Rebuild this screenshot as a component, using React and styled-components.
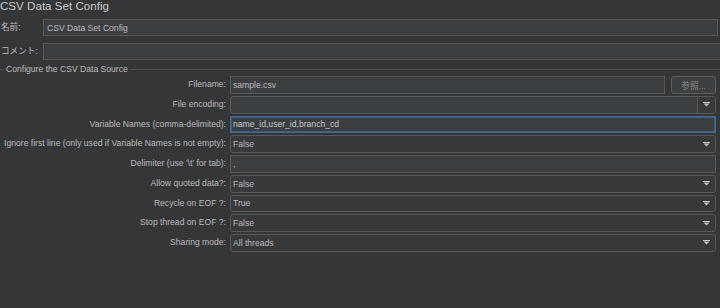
import React from 'react';
import styled, { createGlobalStyle } from 'styled-components';

const GlobalStyle = createGlobalStyle`
  html, body {
    margin: 0;
    padding: 0;
    background: #353638;
    overflow: hidden;
  }
  body {
    font-family: "Liberation Sans", "Noto Sans CJK JP", Arial, sans-serif;
    color: #bbbbbb;
  }
`;

const Page = styled.div`
  width: 720px;
  height: 308px;
  background: #353638;
  box-sizing: border-box;
`;

const Title = styled.div`
  font-size: 11.6px;
  line-height: 13px;
  height: 13px;
  margin-top: -1px;
  color: #c9c9c9;
  white-space: nowrap;
`;

const NameGrid = styled.div`
  display: grid;
  grid-template-columns: 43px 1fr;
  grid-auto-rows: 17px;
  row-gap: 7px;
  margin-top: 7px;
  padding-right: 2px;
`;

const NameLabel = styled.div`
  font-size: 8.6px;
  line-height: 17px;
  padding-left: 1px;
  white-space: nowrap;
`;

const TextField = styled.div`
  display: flex;
  align-items: center;
  box-sizing: border-box;
  height: 100%;
  min-width: 0;
  flex: 1;
  padding-left: ${(p) => p.$pad || 2}px;
  background: #3c3f41;
  border: 1px solid ${(p) => (p.$focused ? '#436892' : '#56595b')};
  box-shadow: ${(p) => (p.$focused ? 'inset 0 0 0 1px #3d5f86' : 'none')};
  margin-right: ${(p) => p.$bleed || 0}px;
  font-size: 8.6px;
  color: ${(p) => (p.$focused ? '#c6c6c6' : '#bbbbbb')};
  white-space: nowrap;
  overflow: hidden;
`;

const GroupHeader = styled.div`
  display: flex;
  align-items: center;
  height: 10px;
  margin-top: 4px;
  font-size: 8.6px;
  color: #bbbbbb;
  white-space: nowrap;
  gap: 2px;

  &::before {
    content: '';
    width: 4px;
    height: 1px;
    background: #4a4c4e;
  }
  &::after {
    content: '';
    flex: 1;
    height: 1px;
    background: #4a4c4e;
  }
`;

const FormGrid = styled.div`
  display: grid;
  grid-template-columns: 226px 1fr;
  grid-auto-rows: 17.75px;
  column-gap: 4px;
  row-gap: 2px;
  margin-top: 2px;
  padding-right: 4px;
`;

const Label = styled.div`
  font-size: 8.6px;
  line-height: 17.75px;
  text-align: right;
  white-space: nowrap;
  color: #bbbbbb;
`;

const FieldRow = styled.div`
  display: flex;
  gap: 6px;
  height: 100%;
  min-width: 0;
`;

const BrowseButton = styled.div`
  width: 45px;
  box-sizing: border-box;
  display: flex;
  align-items: center;
  justify-content: center;
  background: #3d4042;
  border: 1px solid #5c5f61;
  border-radius: 3px;
  font-size: 8.6px;
  color: #8c8c8c;
`;

const Combo = styled.div`
  display: flex;
  align-items: stretch;
  box-sizing: border-box;
  height: 100%;
  border: 1px solid #57595b;
  border-radius: 3px;
  background: ${(p) => (p.$editable ? '#3c3f41' : '#38393b')};
  overflow: hidden;
`;

const ComboText = styled.div`
  flex: 1;
  display: flex;
  align-items: center;
  padding-left: 2px;
  font-size: 8.6px;
  color: #bbbbbb;
  white-space: nowrap;
`;

const ArrowBox = styled.div`
  width: 17px;
  display: flex;
  align-items: center;
  justify-content: center;
  border-left: ${(p) => (p.$divider ? '1px solid #55575a' : 'none')};
  background: ${(p) => (p.$divider ? '#37393b' : 'transparent')};
`;

const Arrow = () => (
  <svg width="7" height="5" viewBox="0 0 7 5">
    <rect x="0" y="0" width="7" height="1" fill="#c4c4c4" />
    <polygon points="0.5,1.5 6.5,1.5 3.5,4.5" fill="#c4c4c4" />
  </svg>
);

const ComboBox = ({ value, editable }) => (
  <Combo $editable={editable}>
    <ComboText>{value}</ComboText>
    <ArrowBox $divider={editable}>
      <Arrow />
    </ArrowBox>
  </Combo>
);

const comboRows = [
  ['Allow quoted data?:', 'False'],
  ['Recycle on EOF ?:', 'True'],
  ['Stop thread on EOF ?:', 'False'],
  ['Sharing mode:', 'All threads'],
];

export default function App() {
  return (
    <Page>
      <GlobalStyle />
      <Title>CSV Data Set Config</Title>
      <NameGrid>
        <NameLabel>名前:</NameLabel>
        <TextField $pad={3}>CSV Data Set Config</TextField>
        <NameLabel>コメント:</NameLabel>
        <TextField $bleed={-6} />
      </NameGrid>

      <GroupHeader>Configure the CSV Data Source</GroupHeader>
      <FormGrid>
        <Label>Filename:</Label>
        <FieldRow>
          <TextField>sample.csv</TextField>
          <BrowseButton>参照...</BrowseButton>
        </FieldRow>

        <Label>File encoding:</Label>
        <ComboBox value="" editable />

        <Label>Variable Names (comma-delimited):</Label>
        <TextField $focused>name_id,user_id,branch_cd</TextField>

        <Label>Ignore first line (only used if Variable Names is not empty):</Label>
        <ComboBox value="False" />

        <Label>Delimiter (use '\t' for tab):</Label>
        <TextField>,</TextField>

        {comboRows.map(([label, value]) => (
          <React.Fragment key={label}>
            <Label>{label}</Label>
            <ComboBox value={value} />
          </React.Fragment>
        ))}
      </FormGrid>
    </Page>
  );
}
